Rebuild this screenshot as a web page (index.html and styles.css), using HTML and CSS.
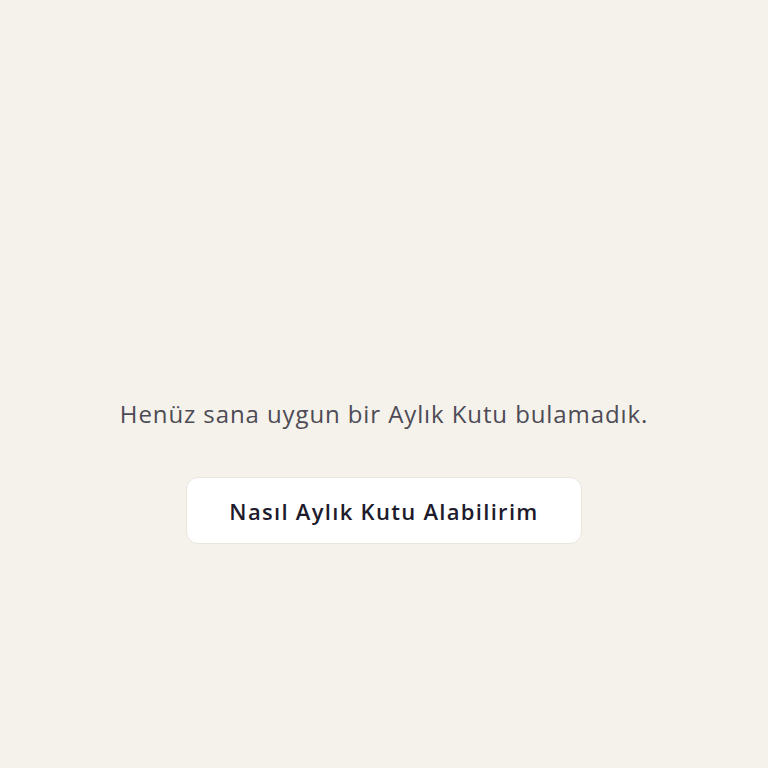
FILE: index.html
```html
<!DOCTYPE html>
<html lang="tr">
<head>
<meta charset="utf-8">
<link rel="stylesheet" href="styles.css">
</head>
<body>
<main class="empty">
  <p class="empty-text">Henüz sana uygun bir Aylık Kutu bulamadık.</p>
  <button class="empty-btn">Nasıl Aylık Kutu Alabilirim</button>
</main>
</body>
</html>
```

FILE: styles.css
```css
html, body {
  margin: 0;
  padding: 0;
  background: #f5f2eb;
}
.empty {
  height: 768px;
  display: flex;
  flex-direction: column;
  align-items: center;
  padding-top: 396px;
  box-sizing: border-box;
  font-family: "Open Sans", "DejaVu Sans", sans-serif;
}
.empty-text {
  margin: 0;
  font-size: 24px;
  line-height: 36px;
  color: #4d4b55;
  letter-spacing: 0.9px;
}
.empty-btn {
  margin-top: 45px;
  width: 396px;
  height: 67px;
  background: #ffffff;
  border: 1px solid #e9e6e0;
  border-radius: 12px;
  font-family: "Open Sans", "DejaVu Sans", sans-serif;
  font-size: 22px;
  font-weight: 600;
  color: #1d1b2c;
  letter-spacing: 1.3px;
  padding: 0;
}
```
